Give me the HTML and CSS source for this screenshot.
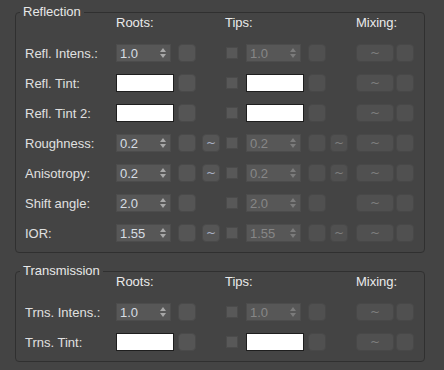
FILE: index.html
```html
<!DOCTYPE html>
<html lang="en">
<head>
  <meta charset="UTF-8">
  <title>Hair Material - Reflection</title>
  <link rel="stylesheet" href="styles.css">
</head>
<body>

  <fieldset class="group">
    <legend>Reflection</legend>
    <div class="rows">
      <div class="row head">
        <span class="c-roots">Roots:</span>
        <span class="c-tips">Tips:</span>
        <span class="c-mix">Mixing:</span>
      </div>

      <div class="row">
        <span class="label">Refl. Intens.:</span>
        <div class="spin"><span>1.0</span><i class="arrows"></i></div>
        <button class="btn"></button>
        <span></span>
        <span class="check"></span>
        <div class="spin off"><span>1.0</span><i class="arrows"></i></div>
        <button class="btn off"></button>
        <span></span>
        <button class="btn wide off">~</button>
        <button class="btn off"></button>
      </div>

      <div class="row">
        <span class="label">Refl. Tint:</span>
        <div class="swatch"></div>
        <button class="btn"></button>
        <span></span>
        <span class="check"></span>
        <div class="swatch"></div>
        <button class="btn off"></button>
        <span></span>
        <button class="btn wide off">~</button>
        <button class="btn off"></button>
      </div>

      <div class="row">
        <span class="label">Refl. Tint 2:</span>
        <div class="swatch"></div>
        <button class="btn"></button>
        <span></span>
        <span class="check"></span>
        <div class="swatch"></div>
        <button class="btn off"></button>
        <span></span>
        <button class="btn wide off">~</button>
        <button class="btn off"></button>
      </div>

      <div class="row">
        <span class="label">Roughness:</span>
        <div class="spin"><span>0.2</span><i class="arrows"></i></div>
        <button class="btn"></button>
        <button class="btn">~</button>
        <span class="check"></span>
        <div class="spin off"><span>0.2</span><i class="arrows"></i></div>
        <button class="btn off"></button>
        <button class="btn off">~</button>
        <button class="btn wide off">~</button>
        <button class="btn off"></button>
      </div>

      <div class="row">
        <span class="label">Anisotropy:</span>
        <div class="spin"><span>0.2</span><i class="arrows"></i></div>
        <button class="btn"></button>
        <button class="btn">~</button>
        <span class="check"></span>
        <div class="spin off"><span>0.2</span><i class="arrows"></i></div>
        <button class="btn off"></button>
        <button class="btn off">~</button>
        <button class="btn wide off">~</button>
        <button class="btn off"></button>
      </div>

      <div class="row">
        <span class="label">Shift angle:</span>
        <div class="spin"><span>2.0</span><i class="arrows"></i></div>
        <button class="btn"></button>
        <span></span>
        <span class="check"></span>
        <div class="spin off"><span>2.0</span><i class="arrows"></i></div>
        <button class="btn off"></button>
        <span></span>
        <button class="btn wide off">~</button>
        <button class="btn off"></button>
      </div>

      <div class="row">
        <span class="label">IOR:</span>
        <div class="spin"><span>1.55</span><i class="arrows"></i></div>
        <button class="btn"></button>
        <button class="btn">~</button>
        <span class="check"></span>
        <div class="spin off"><span>1.55</span><i class="arrows"></i></div>
        <button class="btn off"></button>
        <button class="btn off">~</button>
        <button class="btn wide off">~</button>
        <button class="btn off"></button>
      </div>
    </div>
  </fieldset>

  <fieldset class="group">
    <legend>Transmission</legend>
    <div class="rows">
      <div class="row head">
        <span class="c-roots">Roots:</span>
        <span class="c-tips">Tips:</span>
        <span class="c-mix">Mixing:</span>
      </div>

      <div class="row">
        <span class="label">Trns. Intens.:</span>
        <div class="spin"><span>1.0</span><i class="arrows"></i></div>
        <button class="btn"></button>
        <span></span>
        <span class="check"></span>
        <div class="spin off"><span>1.0</span><i class="arrows"></i></div>
        <button class="btn off"></button>
        <span></span>
        <button class="btn wide off">~</button>
        <button class="btn off"></button>
      </div>

      <div class="row">
        <span class="label">Trns. Tint:</span>
        <div class="swatch"></div>
        <button class="btn"></button>
        <span></span>
        <span class="check"></span>
        <div class="swatch"></div>
        <button class="btn off"></button>
        <span></span>
        <button class="btn wide off">~</button>
        <button class="btn off"></button>
      </div>
    </div>
  </fieldset>

</body>
</html>
```

FILE: styles.css
```css
body {
  margin: 0;
  padding: 7px 0 0 15px;
  background: #444444;
  font-family: "Liberation Sans", Arial, sans-serif;
  font-size: 13px;
  color: #e0e0e0;
}

.group {
  box-sizing: border-box;
  width: 410px;
  margin: 0 0 13px;
  padding: 0 0 10px 9px;
  border: 1px solid #303030;
  border-radius: 4px;
}

legend {
  margin-left: -5px;
  padding: 0 3px;
  line-height: 10px;
  color: #e8e8e8;
}

.rows {
  display: flex;
  flex-direction: column;
  gap: 12px;
}

.row {
  display: grid;
  grid-template-columns: 91px 62px 24px 24px 20px 62px 22px 26px 40px 18px;
  align-items: center;
  height: 18px;
}

.head {
  height: 16px;
  line-height: 16px;
  margin: -2px 0 1px;
  color: #ebebeb;
}

.c-roots { grid-column: 2; }
.c-tips { grid-column: 5 / span 2; margin-left: -1px; }
.c-mix { grid-column: 9 / span 2; }

.label {
  white-space: nowrap;
}

.spin {
  box-sizing: border-box;
  width: 55px;
  height: 18px;
  display: flex;
  align-items: center;
  justify-content: space-between;
  padding: 0 4px 0 3px;
  background: #575757;
  border: 1px solid #4c4c4c;
  color: #d8dee4;
}

.spin.off {
  color: #878787;
}

.arrows {
  width: 0;
  height: 12px;
  border-left: 3px solid transparent;
  border-right: 3px solid transparent;
  position: relative;
}

.arrows::before,
.arrows::after {
  content: "";
  position: absolute;
  left: -3px;
  border-left: 3px solid transparent;
  border-right: 3px solid transparent;
}

.arrows::before {
  top: 1px;
  border-bottom: 4px solid #a8a8a8;
}

.arrows::after {
  bottom: 1px;
  border-top: 4px solid #a8a8a8;
}

.spin.off .arrows::before { border-bottom-color: #7c7c7c; }
.spin.off .arrows::after { border-top-color: #7c7c7c; }

.swatch {
  box-sizing: border-box;
  width: 58px;
  height: 18px;
  background: #ffffff;
  border: 1px solid #1e1e1e;
}

.btn {
  box-sizing: border-box;
  width: 18px;
  height: 18px;
  padding: 0;
  background: #555555;
  border: 1px solid #4a4a4a;
  border-radius: 4px;
  font-family: "DejaVu Sans", sans-serif;
  font-size: 12px;
  line-height: 15px;
  color: #a8b0c4;
}

.btn.off {
  background: #505050;
  border-color: #484848;
  color: #7e7e7e;
}

.btn.wide {
  width: 38px;
}

.check {
  box-sizing: border-box;
  width: 12px;
  height: 12px;
  background: #585858;
  border: 1px solid #4b4b4b;
}
```
